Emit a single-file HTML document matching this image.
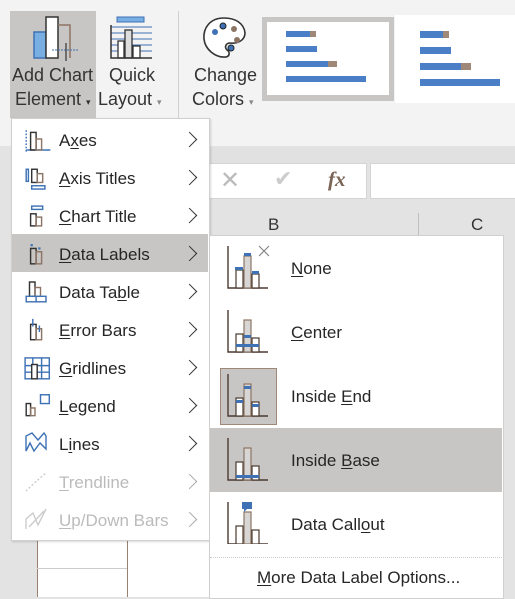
<!DOCTYPE html>
<html><head><style>
body{margin:0;width:515px;height:597px;overflow:hidden;position:relative;background:#e3e3e3;font-family:"Liberation Sans","DejaVu Sans",sans-serif;}
.a{position:absolute}
.t{position:absolute;font-size:18px;color:#333;white-space:nowrap}
.mi{position:absolute;left:59px;font-size:17px;color:#262626;white-space:nowrap}
.ch{position:absolute;left:184px;width:10px;height:10px;border-right:1.6px solid #333;border-top:1.6px solid #333;transform:rotate(45deg)}
.sm{position:absolute;left:291px;font-size:17px;color:#262626}
u{text-decoration:underline;text-underline-offset:2px}
</style></head><body>
<!-- ribbon -->
<div class="a" style="left:0;top:0;width:515px;height:146px;background:#f3f3f3"></div>
<div class="a" style="left:10px;top:11px;width:86px;height:107px;background:#c8c6c4"></div>
<div class="a" style="left:178px;top:11px;width:1px;height:108px;background:#d0d0d0"></div>
<svg class="a" style="left:30px;top:15px" width="50" height="46"><rect x="4" y="17" width="12" height="26" fill="#79aee2" stroke="#3f72b5" stroke-width="1.5"/><rect x="16" y="2" width="12" height="41" fill="#fff" stroke="#333" stroke-width="1.5"/><polyline points="28,10 40,10 40,43" fill="none" stroke="#8d7565" stroke-width="1.5"/><line x1="22" y1="35" x2="48" y2="35" stroke="#3f72b5" stroke-dasharray="2 1"/><line x1="36" y1="28" x2="36" y2="46" stroke="#333" stroke-width="1.2"/></svg>
<div class="t" style="left:12px;top:65px">Add Chart</div>
<div class="t" style="left:15px;top:89px">Element <span style="font-size:9px">▾</span></div>
<svg class="a" style="left:108px;top:15px" width="46" height="46"><rect x="9" y="2" width="27" height="5" fill="#79aee2" stroke="#3f72b5"/><g stroke="#3f72b5"><line x1="3" y1="12" x2="44" y2="12"/><line x1="3" y1="18" x2="44" y2="18"/><line x1="3" y1="24" x2="44" y2="24"/><line x1="3" y1="30" x2="44" y2="30"/><line x1="3" y1="36" x2="44" y2="36"/></g><g fill="#fff" stroke="#333" stroke-width="1.3"><rect x="10" y="26" width="6" height="17"/><rect x="17" y="15" width="7" height="28" fill="#ddd"/><rect x="25" y="31" width="7" height="12"/></g><polyline points="3,10 3,43 44,43" fill="none" stroke="#333" stroke-width="1.5"/></svg>
<div class="t" style="left:109px;top:65px">Quick</div>
<div class="t" style="left:98px;top:89px">Layout <span style="font-size:9px;color:#888">▾</span></div>
<svg class="a" style="left:200px;top:15px" width="48" height="46"><path d="M24 3 C10 3 3 13 4 24 C5 34 15 43 26 42 C30 41 30 37 27 35 C24 32 26 28 30 28 C38 29 45 25 45 18 C44 8 35 3 24 3Z" fill="#fff" stroke="#333" stroke-width="1.6"/><circle cx="15" cy="17" r="3" fill="#3f72b5"/><circle cx="23" cy="11" r="3" fill="#3f72b5" stroke="#222"/><circle cx="34" cy="14" r="3" fill="#8d7565"/><circle cx="37" cy="25" r="3" fill="#8d7565"/><circle cx="31" cy="33" r="3" fill="#3f72b5" stroke="#222"/></svg>
<div class="t" style="left:194px;top:65px">Change</div>
<div class="t" style="left:192px;top:89px">Colors <span style="font-size:9px;color:#888">▾</span></div>
<!-- gallery -->
<div class="a" style="left:262px;top:17px;width:132px;height:84px;background:#c8c6c4"></div>
<div class="a" style="left:267px;top:22px;width:122px;height:73px;background:#fff"></div>
<div class="a" style="left:395px;top:15px;width:120px;height:88px;background:#fff"></div>
<div class="a" style="left:286px;top:31px;width:30px;height:6px;background:#4a7ec6"></div><div class="a" style="left:310px;top:31px;width:6px;height:6px;background:#a08878"></div>
<div class="a" style="left:286px;top:46px;width:31px;height:6px;background:#4a7ec6"></div>
<div class="a" style="left:286px;top:61px;width:44px;height:6px;background:#4a7ec6"></div><div class="a" style="left:328px;top:61px;width:9px;height:6px;background:#a08878"></div>
<div class="a" style="left:286px;top:76px;width:80px;height:6px;background:#4a7ec6"></div>
<div class="a" style="left:420px;top:31px;width:24px;height:7px;background:#4a7ec6"></div><div class="a" style="left:443px;top:31px;width:6px;height:7px;background:#a08878"></div>
<div class="a" style="left:420px;top:47px;width:31px;height:7px;background:#4a7ec6"></div>
<div class="a" style="left:420px;top:63px;width:42px;height:7px;background:#4a7ec6"></div><div class="a" style="left:461px;top:63px;width:10px;height:7px;background:#a08878"></div>
<div class="a" style="left:420px;top:79px;width:80px;height:7px;background:#4a7ec6"></div>
<!-- formula bar -->
<div class="a" style="left:205px;top:147px;width:310px;height:16px;background:#e1e1e1"></div>
<div class="a" style="left:209px;top:163px;width:156px;height:34px;background:#fff;border:1px solid #d4d4d4"></div>
<div class="a" style="left:370px;top:163px;width:145px;height:34px;background:#fff;border:1px solid #d4d4d4"></div>
<div class="a" style="left:220px;top:166px;font-size:24px;color:#bbb">✕</div>
<div class="a" style="left:274px;top:166px;font-size:22px;color:#ccc">✔</div>
<div class="a" style="left:328px;top:167px;font-size:21px;color:#7a6455;font-style:italic;font-weight:bold;font-family:'Liberation Serif',serif">fx</div>
<div class="a" style="left:268px;top:215px;font-size:17px;color:#333">B</div>
<div class="a" style="left:471px;top:215px;font-size:17px;color:#333">C</div>
<div class="a" style="left:418px;top:213px;width:1px;height:27px;background:#c0c0c0"></div>
<!-- cells below menu -->
<div class="a" style="left:37px;top:540px;width:90px;height:57px;background:#fff"></div>
<div class="a" style="left:37px;top:540px;width:1px;height:57px;background:#9a8070"></div>
<div class="a" style="left:127px;top:540px;width:1px;height:57px;background:#9a8070"></div>
<div class="a" style="left:37px;top:568px;width:90px;height:1px;background:#ccc"></div>
<div class="a" style="left:128px;top:540px;width:82px;height:57px;background:#fff"></div>
<!-- left menu -->
<div class="a" style="left:11px;top:118px;width:197px;height:421px;background:#fff;border:1px solid #d0d0d0;box-shadow:1px 1px 2px rgba(0,0,0,.15)"></div>
<div class="a" style="left:12px;top:234px;width:196px;height:38px;background:#c8c6c4"></div>
<div class="mi" style="top:131px">A<u>x</u>es</div>
<div class="mi" style="top:169px"><u>A</u>xis Titles</div>
<div class="mi" style="top:207px"><u>C</u>hart Title</div>
<div class="mi" style="top:245px"><u>D</u>ata Labels</div>
<div class="mi" style="top:283px">Data Ta<u>b</u>le</div>
<div class="mi" style="top:321px"><u>E</u>rror Bars</div>
<div class="mi" style="top:359px"><u>G</u>ridlines</div>
<div class="mi" style="top:397px"><u>L</u>egend</div>
<div class="mi" style="top:435px">L<u>i</u>nes</div>
<div class="mi" style="top:473px;color:#bbb"><u>T</u>rendline</div>
<div class="mi" style="top:511px;color:#bbb"><u>U</u>p/Down Bars</div>
<div class="ch" style="top:134px"></div><div class="ch" style="top:172px"></div><div class="ch" style="top:210px"></div><div class="ch" style="top:248px"></div><div class="ch" style="top:286px"></div><div class="ch" style="top:324px"></div><div class="ch" style="top:362px"></div><div class="ch" style="top:400px"></div><div class="ch" style="top:438px"></div>
<div class="ch" style="top:476px;border-color:#aaa"></div><div class="ch" style="top:514px;border-color:#aaa"></div>
<!-- left icons -->
<svg class="a" style="left:24px;top:128px" width="28" height="300" fill="none" stroke-width="1.3">
<g transform="scale(1.1)">
<g><line x1="2" y1="2" x2="2" y2="22" stroke="#3f72b5" stroke-dasharray="1.5 1.5"/><line x1="2" y1="20" x2="24" y2="20" stroke="#3f72b5"/><rect x="6" y="4" width="5" height="16" stroke="#333"/><rect x="11" y="10" width="5" height="10" stroke="#8d7565"/></g>
<g transform="translate(0,34.5)"><rect x="2" y="3" width="2" height="11" stroke="#3f72b5"/><rect x="7" y="3" width="5" height="12" stroke="#333"/><rect x="12" y="7" width="5" height="8" stroke="#8d7565"/><rect x="7" y="18" width="12" height="3" stroke="#3f72b5"/></g>
<g transform="translate(0,69)"><rect x="7" y="2" width="10" height="3" stroke="#3f72b5"/><rect x="6" y="9" width="5" height="11" stroke="#333"/><rect x="11" y="12" width="5" height="8" stroke="#8d7565"/></g>
<g transform="translate(0,103.5)"><rect x="6" y="2" width="2" height="2" fill="#3f72b5" stroke="none"/><rect x="13" y="5" width="2" height="2" fill="#3f72b5" stroke="none"/><rect x="6" y="6" width="5" height="14" stroke="#333"/><rect x="11" y="9" width="5" height="11" stroke="#8d7565"/></g>
<g transform="translate(0,138)"><rect x="5" y="2" width="5" height="13" stroke="#333"/><rect x="10" y="7" width="5" height="8" stroke="#8d7565"/><rect x="2" y="15" width="18" height="5" stroke="#3f72b5"/><line x1="11" y1="15" x2="11" y2="20" stroke="#3f72b5"/></g>
<g transform="translate(0,172.5)"><rect x="6" y="6" width="5" height="14" stroke="#333"/><rect x="11" y="10" width="5" height="10" stroke="#8d7565"/><line x1="8" y1="1" x2="8" y2="8" stroke="#3f72b5"/><line x1="14" y1="7" x2="14" y2="13" stroke="#3f72b5"/></g>
<g transform="translate(0,207)" stroke="#3f72b5"><rect x="1" y="2" width="22" height="19"/><line x1="1" y1="9" x2="23" y2="9"/><line x1="1" y1="15" x2="23" y2="15"/><line x1="8" y1="2" x2="8" y2="21"/><line x1="16" y1="2" x2="16" y2="21"/><rect x="7" y="8" width="5" height="13" stroke="#333" fill="#fff"/></g>
<g transform="translate(0,241.5)"><rect x="15" y="1" width="8" height="8" stroke="#3f72b5"/><rect x="2" y="9" width="4" height="11" stroke="#333"/><rect x="6" y="13" width="4" height="7" stroke="#8d7565"/></g>
</g></svg>
<svg class="a" style="left:24px;top:431px" width="28" height="100" fill="none" stroke-width="1.4">
<path d="M2 20 L2 5 L8 2 L14 9 L20 2 L22 5 L22 18 L16 12 L10 20 L6 12 Z" stroke="#3f72b5"/>
<path d="M2 22 Q10 14 22 4" stroke="#ccc" stroke-dasharray="2 2" transform="translate(0,38)"/>
<path d="M2 22 L2 12 L9 6 L14 18 L20 6 L22 2 M5 20 L20 4" stroke="#ccc" transform="translate(0,76)"/>
</svg>
<!-- submenu -->
<div class="a" style="left:209px;top:235px;width:293px;height:362px;background:#fff;border:1px solid #d0d0d0"></div>
<div class="a" style="left:210px;top:428px;width:292px;height:64px;background:#c8c6c4"></div>
<div class="a" style="left:220px;top:368px;width:55px;height:55px;background:#c8c6c4;border:1px solid #a08878"></div>
<div class="a" style="left:210px;top:557px;width:292px;border-top:1px dotted #ccc"></div>
<svg class="a" style="left:226px;top:244px" width="50" height="300" fill="none" stroke-width="1.2">
<defs><g id="c"><polyline points="2,2 2,44 42,44" stroke="#4a3a30" stroke-width="1.4"/><rect x="10" y="26" width="7" height="18" fill="#fff" stroke="#4a3a30"/><rect x="18" y="12" width="7" height="32" fill="#d8d6d4" stroke="#8d7565"/><rect x="26" y="30" width="7" height="14" fill="#fff" stroke="#4a3a30"/></g></defs>
<use href="#c" y="0"/><rect x="9" y="23" width="8" height="3" fill="#3f72b5" stroke="none"/><rect x="18" y="9" width="7" height="3" fill="#3f72b5" stroke="none"/><rect x="26" y="27" width="7" height="3" fill="#3f72b5" stroke="none"/><path d="M33 2 L43 12 M43 2 L33 12" stroke="#888"/>
<g transform="translate(0,64)"><use href="#c"/><rect x="10" y="36" width="23" height="3" fill="#3f72b5" stroke="none"/><rect x="18" y="27" width="7" height="3" fill="#3f72b5" stroke="none"/></g>
<g transform="translate(0,128)"><use href="#c"/><rect x="10" y="28" width="7" height="3" fill="#3f72b5" stroke="none"/><rect x="18" y="14" width="7" height="3" fill="#3f72b5" stroke="none"/><rect x="26" y="32" width="7" height="3" fill="#3f72b5" stroke="none"/></g>
<g transform="translate(0,192)"><use href="#c"/><rect x="10" y="39" width="23" height="3" fill="#3f72b5" stroke="none"/></g>
<g transform="translate(0,256)"><use href="#c"/><path d="M16 2 H26 V9 H21 L18 12 V9 H16 Z" fill="#3f72b5" stroke="none"/></g>
</svg>
<div class="sm" style="top:259px"><u>N</u>one</div>
<div class="sm" style="top:323px"><u>C</u>enter</div>
<div class="sm" style="top:387px">Inside <u>E</u>nd</div>
<div class="sm" style="top:451px">Inside <u>B</u>ase</div>
<div class="sm" style="top:515px">Data Call<u>o</u>ut</div>
<div class="a" style="left:257px;top:568px;font-size:17px;color:#262626"><u>M</u>ore Data Label Options...</div>
</body></html>
